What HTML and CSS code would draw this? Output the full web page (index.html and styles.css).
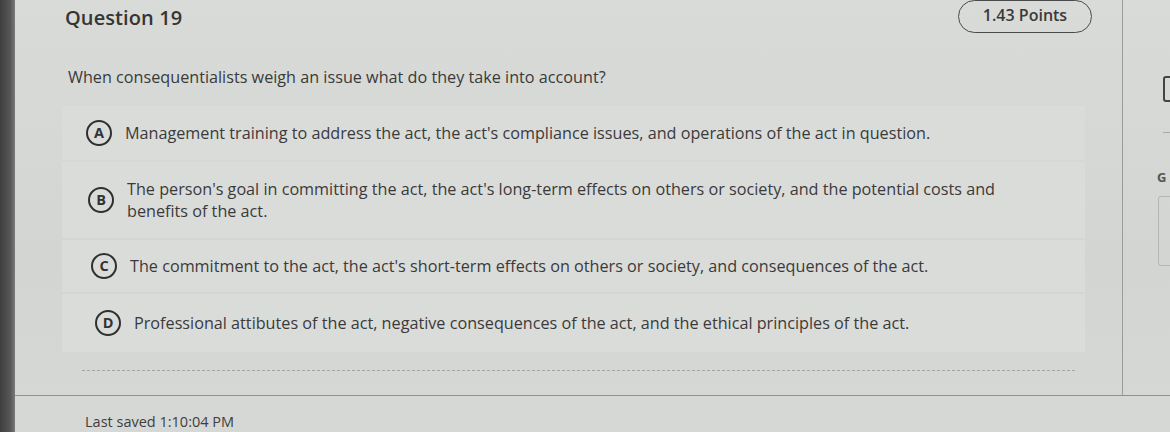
FILE: index.html
```html
<!DOCTYPE html>
<html>
<head>
<meta charset="utf-8">
<link rel="stylesheet" href="styles.css">
</head>
<body>
<div class="screen">
  <div class="bezel"></div>
  <div class="content">
    <div class="top">
      <div class="main">
        <div class="header">
          <h1 class="title">Question 19</h1>
          <div class="points">1.43 Points</div>
        </div>
        <p class="question">When consequentialists weigh an issue what do they take into account?</p>
        <div class="options">
          <div class="option opt-a">
            <span class="letter">A</span>
            <span class="text">Management training to address the act, the act's compliance issues, and operations of the act in question.</span>
          </div>
          <div class="option opt-b">
            <span class="letter">B</span>
            <span class="text">The person's goal in committing the act, the act's long-term effects on others or society, and the potential costs and benefits of the act.</span>
          </div>
          <div class="option opt-c">
            <span class="letter">C</span>
            <span class="text">The commitment to the act, the act's short-term effects on others or society, and consequences of the act.</span>
          </div>
          <div class="option opt-d">
            <span class="letter">D</span>
            <span class="text">Professional attibutes of the act, negative consequences of the act, and the ethical principles of the act.</span>
          </div>
        </div>
        <div class="dashed"></div>
      </div>
      <div class="side">
        <div class="side-box1"></div>
        <div class="side-line"></div>
        <div class="side-letter">G</div>
        <div class="side-box2"></div>
      </div>
    </div>
    <div class="footer">
      <span class="saved">Last saved 1:10:04 PM</span>
    </div>
  </div>
</div>
</body>
</html>
```

FILE: styles.css
```css
* { box-sizing: border-box; }
html, body { margin: 0; padding: 0; }
body {
  width: 1170px;
  height: 432px;
  overflow: hidden;
  font-family: "Open Sans", "Liberation Sans", sans-serif;
  background: #d4d6d4;
  color: #3b3b3b;
}
.screen {
  display: flex;
  width: 1170px;
  height: 432px;
}
.bezel {
  width: 15px;
  flex: none;
  background: linear-gradient(90deg, #3e3e3e 0%, #585858 70%, #7a7a7a 100%);
}
.content {
  flex: 1;
  display: flex;
  flex-direction: column;
  background: linear-gradient(180deg, #d9dbd9 0%, #d3d5d3 60%, #d6d8d6 100%);
}
.top {
  display: flex;
  height: 396px;
  border-bottom: 1px solid #8f918f;
}
.main {
  width: 1108px;
  flex: none;
  border-right: 1px solid #9a9c9a;
  display: flex;
  flex-direction: column;
}
.header {
  height: 34px;
  display: flex;
  align-items: center;
  justify-content: space-between;
  padding: 0 30px 0 50px;
}
.title {
  margin: 0;
  font-size: 20px;
  font-weight: 600;
  color: #353535;
  letter-spacing: 0.1px;
}
.points {
  height: 33px;
  width: 134px;
  margin-top: -2px;
  border: 1.5px solid #4a4a4a;
  border-radius: 17px;
  display: flex;
  align-items: center;
  justify-content: center;
  padding-bottom: 2px;
  font-size: 16px;
  font-weight: 600;
  color: #3a3a3a;
}
.question {
  margin: 32px 0 0 53px;
  font-size: 16.2px;
  line-height: 22px;
  color: #3a3a3a;
}
.options {
  margin: 18px 0 0 47px;
  width: 1023px;
  display: flex;
  flex-direction: column;
  gap: 2px;
}
.option {
  display: flex;
  align-items: center;
  gap: 13px;
  padding: 14px 0 14px 24px;
  background: #dadcda;
  font-size: 16.2px;
  line-height: 22px;
  color: #3a3a3a;
}
.opt-b { padding: 16px 0 16px 26px; }
.opt-b .text { max-width: 890px; }
.opt-c { padding: 13px 0 13px 29px; }
.opt-d { padding: 16px 0 16px 33px; }
.letter {
  width: 26px;
  height: 26px;
  flex: none;
  border: 2px solid #2f2f2f;
  border-radius: 50%;
  display: flex;
  align-items: center;
  justify-content: center;
  font-size: 14.5px;
  font-weight: 700;
  color: #333;
  line-height: 1;
}
.dashed {
  margin: 18px 0 0 67px;
  width: 993px;
  border-top: 1px dashed #a2a4a2;
}
.side {
  flex: 1;
  position: relative;
  overflow: hidden;
}
.side-box1 {
  position: absolute;
  left: 40px;
  top: 76px;
  width: 30px;
  height: 26px;
  border: 2px solid #444;
  border-radius: 3px;
}
.side-line {
  position: absolute;
  left: 40px;
  top: 132px;
  width: 20px;
  border-top: 1px solid #a8aaa8;
}
.side-letter {
  position: absolute;
  left: 34px;
  top: 168px;
  font-size: 13px;
  font-weight: 700;
  color: #555;
}
.side-box2 {
  position: absolute;
  left: 35px;
  top: 196px;
  width: 40px;
  height: 70px;
  border: 1px solid #b4b6b4;
  border-radius: 3px;
}
.footer {
  flex: 1;
  padding: 14px 0 0 70px;
}
.saved {
  font-size: 14.5px;
  color: #3e3e3e;
}
```
